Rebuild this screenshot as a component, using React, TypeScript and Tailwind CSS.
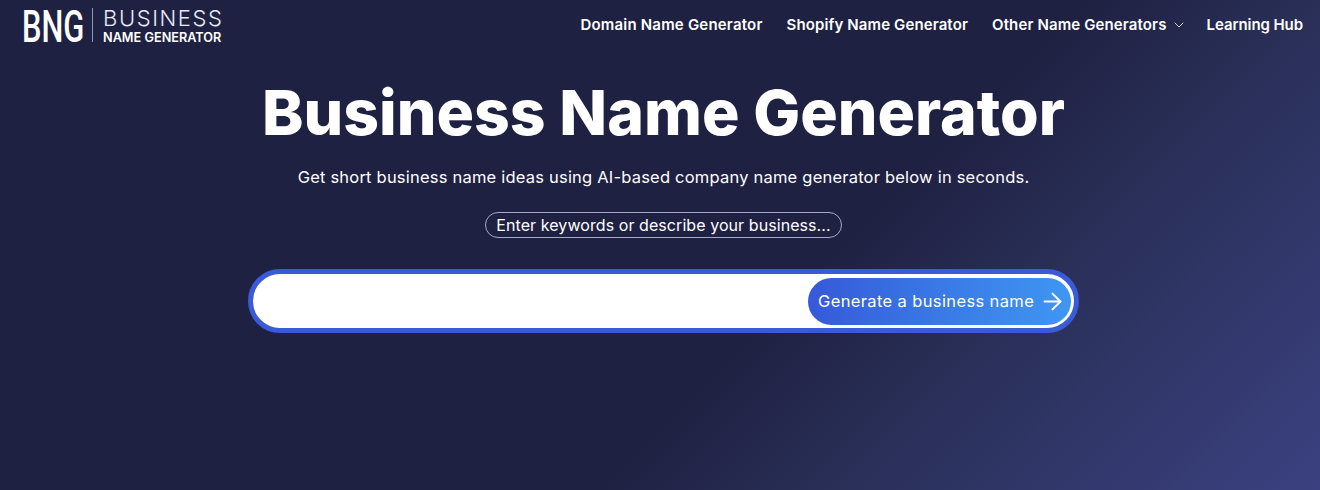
import { ArrowRight, ChevronDown } from "lucide-react";

const font = "font-['Inter','Liberation_Sans',sans-serif]";

function Logo() {
  return (
    <div className="flex items-center text-white">
      <span className="font-['Roboto',sans-serif] font-medium text-[45px] leading-[53px] h-[53px] mt-[3px] w-[96px] -ml-[2px] -mr-[35px] origin-left scale-x-[0.685] whitespace-nowrap">
        BNG
      </span>
      <div className="w-px h-[34px] bg-[#8f93b5] ml-[9px] mr-[10px]" />
      <div className="flex flex-col font-['Inter',sans-serif] text-[#e6e8f6]">
        <span className="text-[22px] leading-[25px] font-light tracking-[1.6px]">BUSINESS</span>
        <span className="text-[12.7px] leading-[14px] font-semibold text-white">NAME GENERATOR</span>
      </div>
    </div>
  );
}

export default function App() {
  return (
    <div className={`${font} w-[1320px] h-[490px] overflow-hidden bg-[linear-gradient(135deg,#1f2142_0%,#1f2142_60%,#2a3059_74%,#3b4180_100%)] text-white`}>
      {/* Header */}
      <header className="h-[50px] flex items-center justify-between pl-6 pr-[17px]">
        <Logo />
        <nav className="flex items-center gap-6 text-[15px] font-semibold tracking-[0.12px]">
          <a className="tracking-[0.2px]">Domain Name Generator</a>
          <a>Shopify Name Generator</a>
          <a className="flex items-center gap-1 tracking-[0.13px]">
            Other Name Generators
            <ChevronDown size={16} strokeWidth={1.2} className="-mr-1" />
          </a>
          <a className="tracking-[-0.08px]">Learning Hub</a>
        </nav>
      </header>

      {/* Hero */}
      <main className="flex flex-col items-center pl-[7px]">
        <h1 className="mt-[19px] text-[62.5px] leading-[86px] font-extrabold whitespace-nowrap">Business Name Generator</h1>
        <p className="mt-[10px] text-[16.5px] leading-6 tracking-[0.21px]">
          Get short business name ideas using AI-based company name generator below in seconds.
        </p>
        <div className="mt-[23px] h-[26px] px-[10px] flex items-center rounded-full border border-[#a7a9c6] text-[16px] tracking-[0.07px]">
          Enter keywords or describe your business...
        </div>
        <form className="mt-[31px] w-[831px] h-[64px] rounded-full border-[5px] border-[#3a5bd9] bg-white flex items-center justify-end pr-[3px]">
          <input className="flex-1 min-w-0 h-full bg-transparent outline-none rounded-full" />
          <button
            type="button"
            className="w-[263px] h-[47px] rounded-full bg-gradient-to-r from-[#3659d8] to-[#3f97f3] flex items-center justify-between pl-[10px] pr-[5px] text-[16.5px] tracking-[0.37px]"
          >
            Generate a business name
            <ArrowRight size={27} strokeWidth={1.8} />
          </button>
        </form>
      </main>
    </div>
  );
}
